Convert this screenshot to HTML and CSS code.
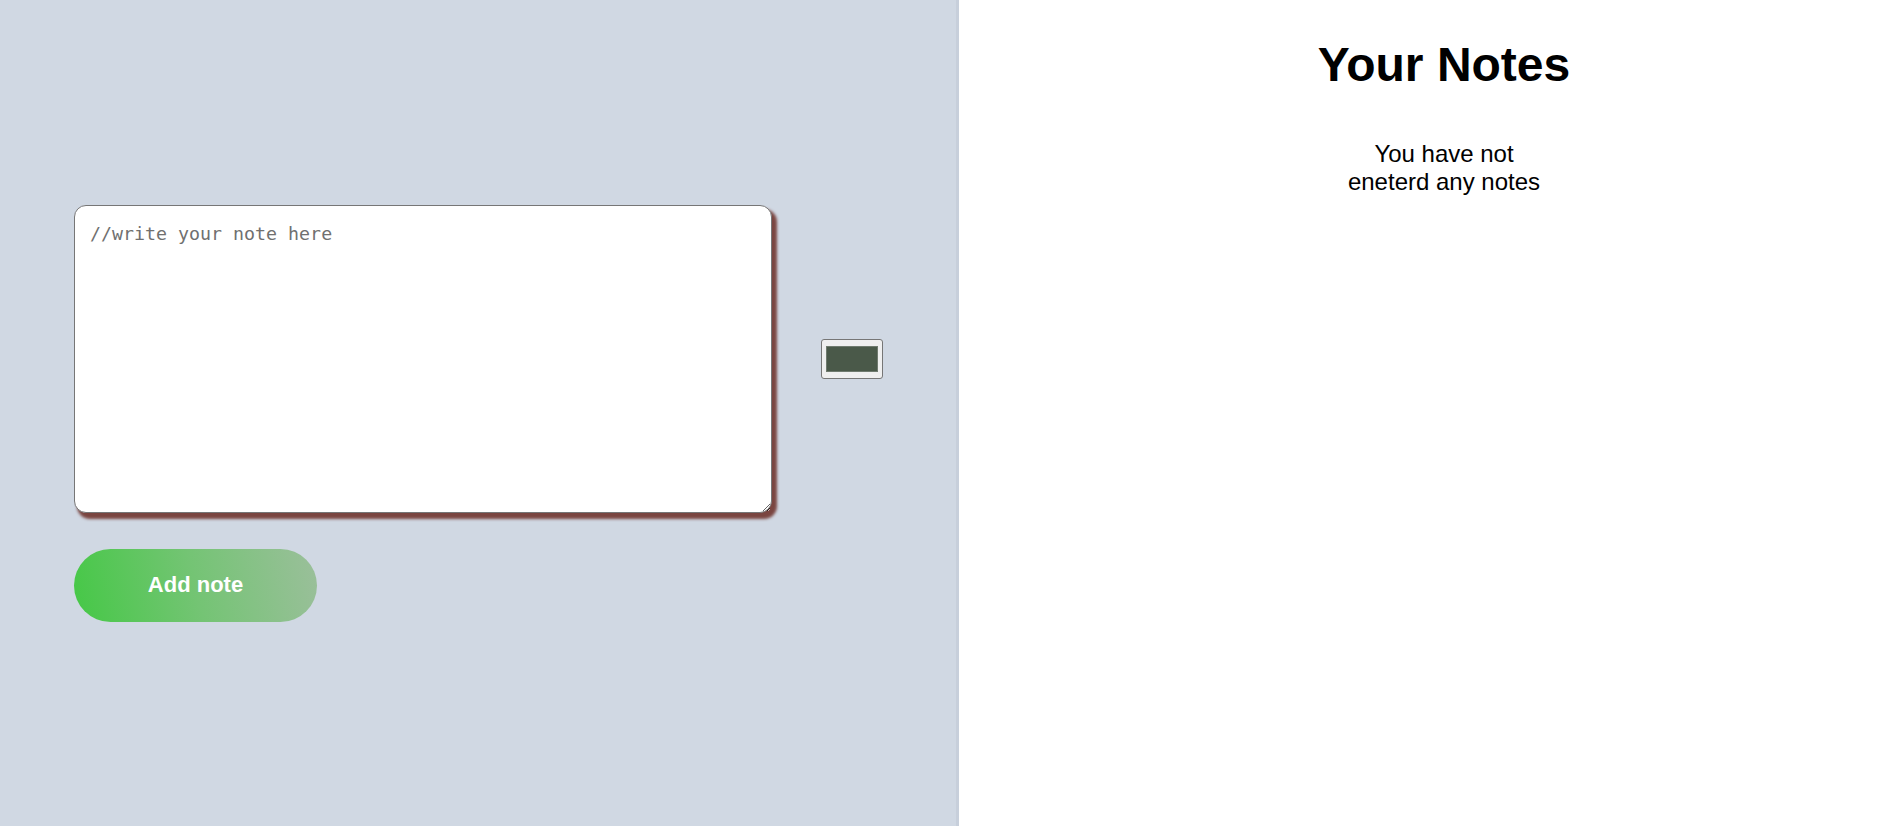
FILE: index.html
```html
<!DOCTYPE html>
<html lang="en">
<head>
<meta charset="utf-8">
<title>Notes</title>
<link rel="stylesheet" href="styles.css">
</head>
<body>
<main class="app">
  <section class="editor">
    <div class="editor-row">
      <textarea class="note-input" placeholder="//write your note here"></textarea>
      <input class="color-pick" type="color" value="#4a5949">
    </div>
    <button class="add-btn" type="button">Add note</button>
  </section>
  <section class="notes">
    <h1 class="notes-title">Your Notes</h1>
    <p class="notes-empty">You have not eneterd any notes</p>
  </section>
</main>
</body>
</html>
```

FILE: styles.css
```css
html, body {
  margin: 0;
  padding: 0;
  height: 100%;
}

body {
  font-family: "Liberation Sans", Arial, sans-serif;
  color: #000;
}

.app {
  display: flex;
  height: 100vh;
}

.editor {
  width: 882px;
  flex: none;
  background: #d0d8e3;
  border-right: 3px solid #c7cfdb;
  display: flex;
  flex-direction: column;
  justify-content: center;
  align-items: flex-start;
  padding-left: 74px;
  box-sizing: content-box;
}

.editor-row {
  display: flex;
  align-items: center;
}

.note-input {
  box-sizing: border-box;
  width: 698px;
  height: 308px;
  border: 1px solid #767676;
  border-radius: 12px;
  padding: 17px 15px 14px;
  font-family: "DejaVu Sans Mono", "Liberation Mono", monospace;
  font-size: 18.3px;
  color: #333;
  background: #fff;
  box-shadow: 4px 5px 3px 1px #7a4540;
  outline: none;
}

.note-input::placeholder {
  color: #707070;
}

.color-pick {
  box-sizing: border-box;
  width: 62px;
  height: 40px;
  margin-left: 49px;
  padding: 1px 2px;
  border: 1px solid #767676;
  border-radius: 3px;
  background: #efefef;
  cursor: pointer;
}

.color-pick::-webkit-color-swatch-wrapper {
  padding: 5px 2px;
}

.color-pick::-webkit-color-swatch {
  border: 1px solid #6f7a6e;
  border-radius: 0;
}

.add-btn {
  margin-top: 36px;
  width: 243px;
  height: 73px;
  border: none;
  border-radius: 37px;
  background: linear-gradient(78deg, #45c846 0%, #74c474 50%, #9bbf9b 100%);
  color: #fff;
  font-family: "Liberation Sans", Arial, sans-serif;
  font-weight: bold;
  font-size: 22px;
  cursor: pointer;
}

.notes {
  flex: 1;
  display: flex;
  flex-direction: column;
  align-items: center;
  padding-left: 37px;
  background: #fff;
}

.notes-title {
  margin: 37px 0 0;
  font-size: 48px;
  font-weight: bold;
}

.notes-empty {
  margin: 48px 0 0;
  width: 210px;
  text-align: center;
  font-size: 24px;
}
```
